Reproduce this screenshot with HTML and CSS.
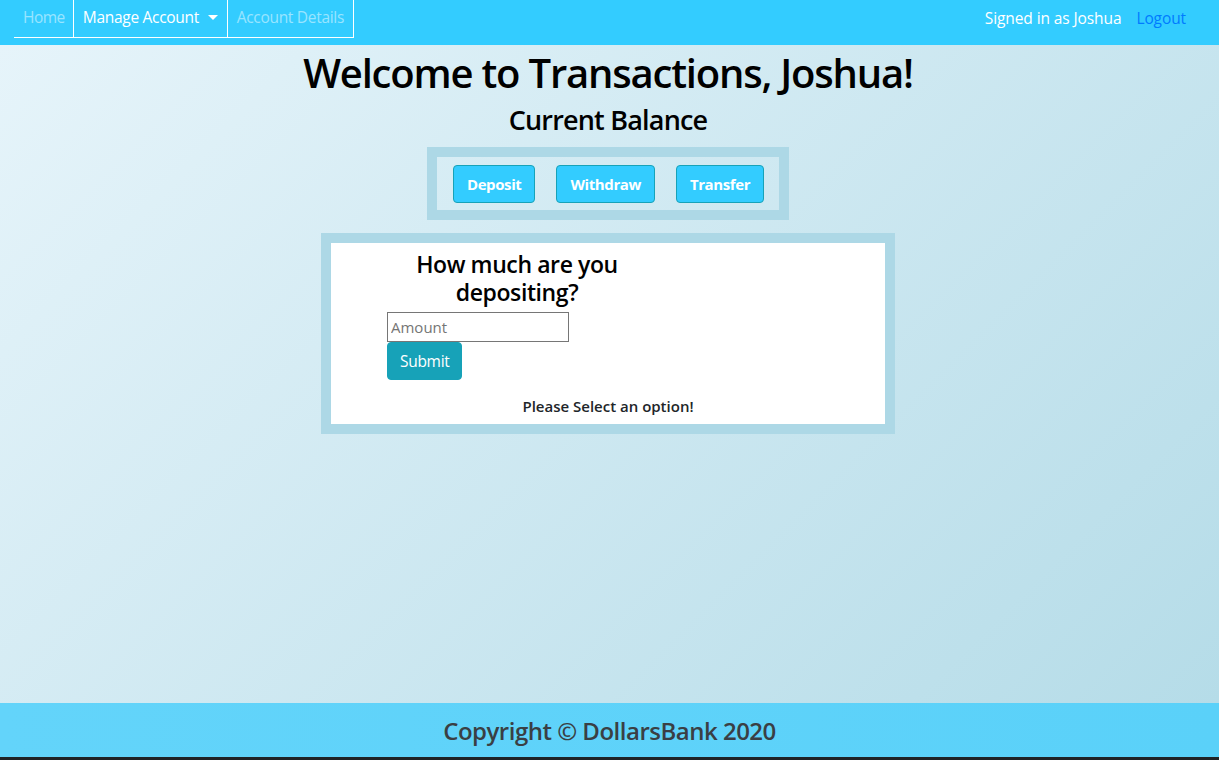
FILE: index.html
```html
<!DOCTYPE html>
<html lang="en">
<head>
<meta charset="utf-8">
<title>Transactions</title>
<link rel="stylesheet" href="styles.css">
</head>
<body>
<nav class="navbar">
  <ul class="nav-links">
    <li class="nav-item muted">Home</li>
    <li class="nav-item bordered">Manage Account <span class="caret"></span></li>
    <li class="nav-item muted bordered last">Account Details</li>
  </ul>
  <div class="nav-right">
    <span class="signed">Signed in as Joshua</span>
    <span class="logout">Logout</span>
  </div>
</nav>
<main class="main">
  <h1 class="title">Welcome to Transactions, Joshua!</h1>
  <h3 class="subtitle">Current Balance</h3>
  <div class="actions">
    <button class="action-btn">Deposit</button>
    <button class="action-btn">Withdraw</button>
    <button class="action-btn">Transfer</button>
  </div>
  <div class="panel">
    <div class="panel-inner">
      <form class="deposit-form">
        <h4 class="question">How much are you depositing?</h4>
        <input class="amount" type="text" placeholder="Amount">
        <button class="submit" type="button">Submit</button>
      </form>
      <p class="notice">Please Select an option!</p>
    </div>
  </div>
</main>
<footer class="footer">Copyright © DollarsBank 2020</footer>
<div class="bottom-strip"></div>
</body>
</html>
```
FILE: styles.css
```css
* { box-sizing: border-box; }
html, body { margin: 0; padding: 0; }
body {
  font-family: "Open Sans", "Noto Sans", sans-serif;
  font-size: 16px;
  color: #212529;
  height: 760px;
  display: flex;
  flex-direction: column;
}
.navbar {
  height: 45px;
  background: #33ccff;
  display: flex;
  justify-content: space-between;
  align-items: flex-start;
  padding: 0 33px 0 14px;
}
.nav-links {
  list-style: none;
  margin: 0;
  padding: 0;
  display: flex;
  border-bottom: 1px solid #fff;
  height: 38px;
}
.nav-item {
  height: 37px;
  padding: 6px 9px 0 9px;
  color: #fff;
  font-size: 15.5px;
  letter-spacing: -0.3px;
  white-space: nowrap;
}
.nav-item.muted { color: rgba(255,255,255,0.5); }
.nav-item:first-child { padding-left: 9px; padding-right: 8px; letter-spacing: -0.5px; }
.nav-item.bordered { border-left: 1px solid #fff; }
.nav-item.last { border-right: 1px solid #fff; }
.caret {
  display: inline-block;
  width: 0; height: 0;
  margin-left: 5px;
  vertical-align: 3px;
  border-left: 5px solid transparent;
  border-right: 5px solid transparent;
  border-top: 5px solid #fff;
}
.nav-right {
  display: flex;
  gap: 15px;
  padding-top: 7px;
  font-size: 15.5px;
  letter-spacing: -0.1px;
}
.signed { color: #fff; }
.logout { color: #007bff; }
.main {
  flex: 1;
  background: linear-gradient(135deg, #e6f4fa 0%, #b5dce8 100%);
  display: flex;
  flex-direction: column;
  align-items: center;
  padding-right: 3px;
}
.title {
  margin: 4px 0 0;
  font-size: 40px;
  font-weight: 600;
  letter-spacing: -1.2px;
  line-height: 48px;
  color: #000;
}
.subtitle {
  margin: 6px 0 0;
  font-size: 27px;
  font-weight: 600;
  letter-spacing: -0.8px;
  line-height: 34px;
  color: #000;
}
.actions {
  margin-top: 10px;
  border: 10px solid #add8e6;
  padding: 8px 15px 7px 16px;
  display: flex;
  gap: 21px;
}
.action-btn {
  height: 38px;
  padding: 0 13px;
  background: #33ccff;
  border: 1px solid #17a2b8;
  border-radius: 4px;
  color: #fff;
  font-family: inherit;
  font-weight: 700;
  font-size: 15px;
  letter-spacing: -0.4px;
}
.panel {
  margin-top: 13px;
  width: 574px;
  border: 10px solid #add8e6;
  background: #fff;
}
.panel-inner {
  display: flex;
  flex-direction: column;
  padding: 7px 0 0;
}
.deposit-form {
  width: 260px;
  margin-left: 56px;
  display: flex;
  flex-direction: column;
  align-items: flex-start;
}
.question {
  align-self: stretch;
  margin: 0 0 6px;
  text-align: center;
  font-size: 23px;
  font-weight: 600;
  letter-spacing: -0.4px;
  line-height: 28px;
  color: #000;
}
.amount {
  width: 182px;
  height: 30px;
  border: 1px solid #767676;
  font-family: inherit;
  font-size: 15px;
  padding: 0 3px;
  margin: 0;
}
.amount::placeholder { color: #757575; }
.submit {
  height: 38px;
  padding: 0 12px;
  background: #17a2b8;
  border: 1px solid #17a2b8;
  border-radius: 4px;
  color: #fff;
  font-family: inherit;
  font-size: 15.5px;
  letter-spacing: -0.3px;
}
.notice {
  margin: 15px 0 7px;
  text-align: center;
  font-size: 15px;
  font-weight: 600;
  letter-spacing: 0;
  line-height: 22px;
}
.footer {
  height: 54px;
  background: linear-gradient(90deg, #63d4fa, #5ad1f9);
  display: flex;
  align-items: center;
  justify-content: center;
  font-size: 24px;
  font-weight: 600;
  letter-spacing: -0.5px;
  color: #3a3f44;
}
.bottom-strip {
  height: 3px;
  background: #1f2326;
}
```
